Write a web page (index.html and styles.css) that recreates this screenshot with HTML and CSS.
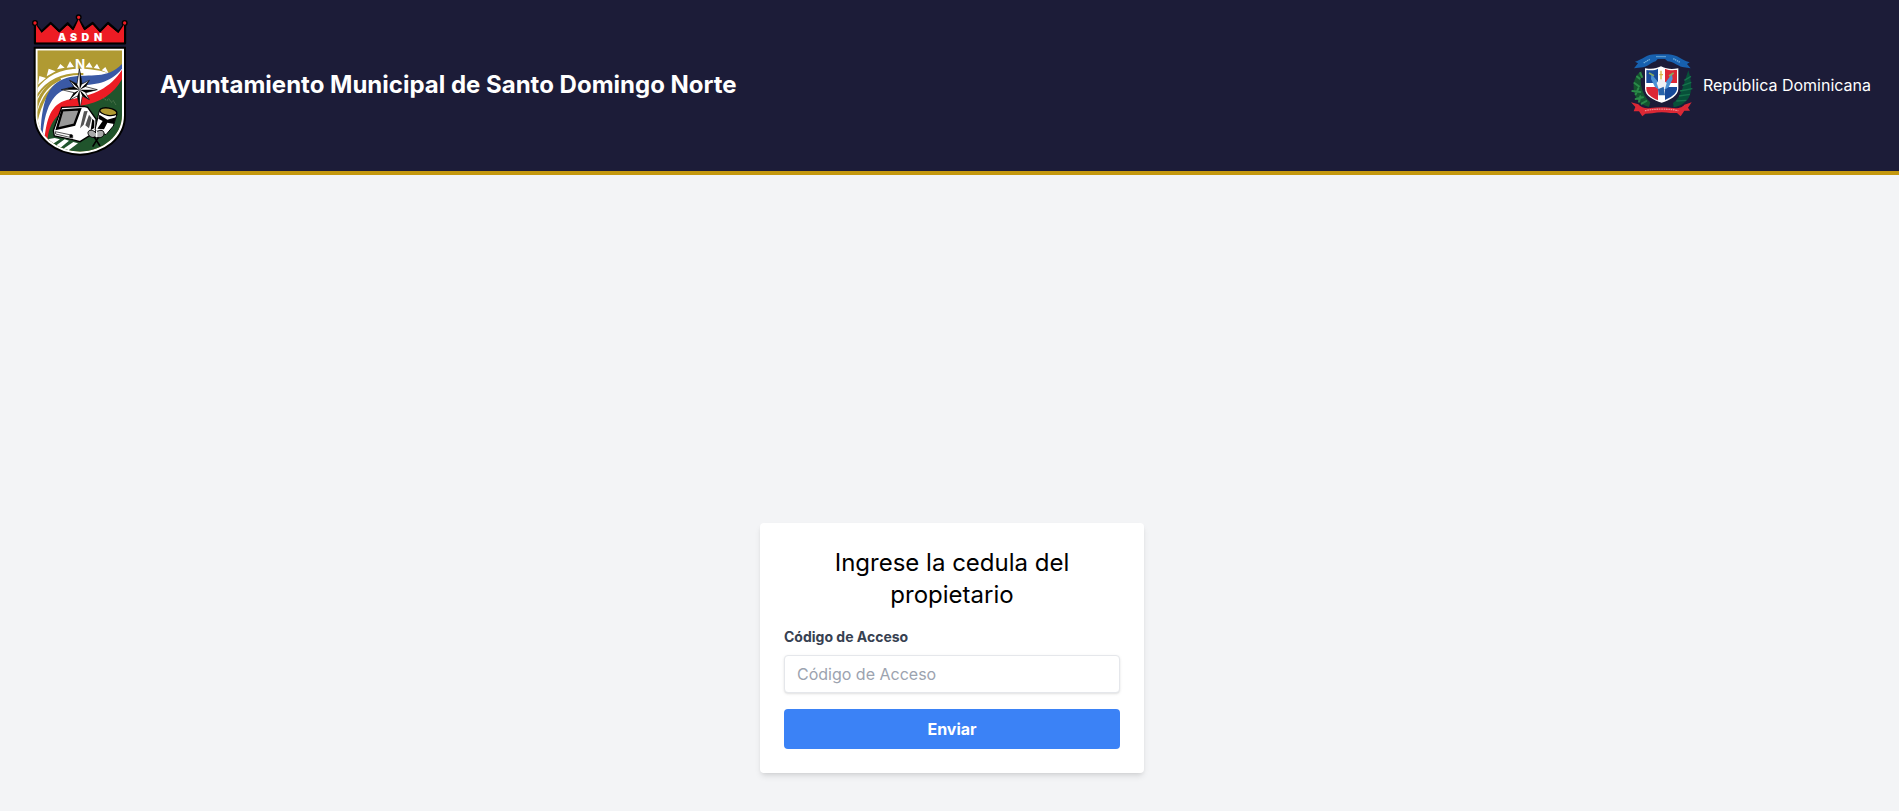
FILE: index.html
```html
<!DOCTYPE html>
<html lang="es">
<head>
<meta charset="utf-8">
<meta name="viewport" content="width=device-width, initial-scale=1">
<title>Ayuntamiento Municipal de Santo Domingo Norte</title>
<link rel="stylesheet" href="styles.css">
</head>
<body>
<header class="header">
  <div class="brand">
    <svg class="crest" viewBox="30 36 300 435" role="img" aria-label="Escudo ASDN">
      <defs>
        <clipPath id="shield"><path d="M52 151H306V345C306 408 249 452 180 455C111 452 52 408 52 345Z"/></clipPath>
      </defs>
      <path d="M45 130V73L65 95L92 69L118 94L143 70L159 87L176 58L194 87L218 69L240 94L264 69L295 96L315 72V130Z" fill="#ed1c24" stroke="#000" stroke-width="7" stroke-linejoin="round"/>
      <g fill="#ed1c24" stroke="#000" stroke-width="4"><circle cx="45" cy="69" r="7"/><circle cx="176" cy="52" r="7"/><circle cx="314" cy="69" r="7"/></g>
      <path d="M48 74L65 99L92 75L118 99L143 76L160 93L176 58L192 93L218 75L240 99L264 75L295 100L312 74V127H48Z" fill="#ed1c24"/>
      <g class="crest-name" text-anchor="middle">
        <text x="126" y="123">A</text>
        <text x="161" y="123">S</text>
        <text x="196" y="123">D</text>
        <text x="234" y="123">N</text>
      </g>
      <path d="M44 143H315V346C315 417 252 461 180 464C108 461 44 417 44 346Z" fill="#fff" stroke="#000" stroke-width="6"/>
      <g clip-path="url(#shield)">
        <path d="M50 150H308V460H50Z" fill="#b09a32"/>
        <path d="M50 268C85 217 145 194 240 212L275 222L190 262L54 420Z" fill="#fff"/>
        <path d="M50 290C80 240 125 220 190 222" fill="none" stroke="#b09a32" stroke-width="6"/>
        <path d="M48 325C62 275 87 252 122 236M48 365C62 305 82 272 116 252" fill="none" stroke="#b09a32" stroke-width="9"/>
        <path fill="#fff" d="M54 254L58 228L78 234ZM80 229L86 206L107 214ZM111 208L121 192L134 203ZM140 203L150 184L162 201ZM196 202L208 187L218 203ZM221 204L231 191L240 208ZM245 211L256 201L266 220Z"/>
        <path d="M62 400C66 290 90 244 150 231C215 220 260 240 308 190V260L130 380L60 420Z" fill="#3a59a5"/>
        <path d="M68 405C76 310 105 268 165 260C230 252 270 252 308 204V270L110 400L66 430Z" fill="#fff"/>
        <path d="M74 412C82 345 98 308 150 298C220 288 275 262 308 206V290L100 430Z" fill="#ed1c24"/>
        <path d="M82 462C76 380 105 328 178 318C245 308 282 280 308 234V462Z" fill="#20542c"/>
        <path d="M82 418L104 414L120 418L98 432ZM106 438L134 418L147 422L118 446ZM128 448L160 426L174 430L140 455Z" fill="#fff"/>
      </g>
      <text class="crest-north" x="180" y="206" text-anchor="middle">N</text>
      <path d="M178 206L186 252L208 241L197 260L232 269L197 278L208 299L187 288L180 326L172 288L149 300L162 278L124 269L162 260L149 241L171 252Z" fill="#fff" stroke="#000" stroke-width="2"/>
      <path d="M179 206L186 252L179 269ZM180 326L172 288L179 269ZM232 269L197 278L179 269ZM124 269L162 260L179 269ZM208 241L197 260L179 269ZM149 300L162 278L179 269ZM149 241L171 252L179 269ZM208 299L187 288L179 269Z"/>
      <path d="M125 322L192 319L203 322L228 357V395L180 425L157 419L103 408L100 392Z" fill="#fff" stroke="#000" stroke-width="4"/>
      <path d="M127 331L180 328L163 374L111 386Z" fill="#999" stroke="#000" stroke-width="7"/>
      <path d="M192 334L203 333L191 374L180 385ZM207 344L215 354L207 385L196 376Z" fill="#555"/>
      <path d="M217 356L223 362V384L212 391Z"/>
      <path d="M106 395L158 406V414L107 402Z" stroke="#000" stroke-width="2" fill="#fff"/>
      <circle cx="153" cy="408" r="5"/>
      <path d="M238 332L291 342L280 378L258 404L225 390Z" fill="#fff" stroke="#000" stroke-width="3"/>
      <path d="M238 344L262 359L288 352L282 372L262 368L252 388L232 386L248 363L235 356Z"/>
      <ellipse cx="265" cy="335" rx="26" ry="11" transform="rotate(9 265 335)" fill="#b09a32" stroke="#000" stroke-width="4"/>
      <path d="M228 412C215 415 203 408 204 397C206 388 220 389 228 399C236 387 252 389 252 400C252 411 240 416 228 412Z" fill="#aaa" stroke="#000" stroke-width="3"/>
      <path d="M230 391V412" stroke="#fff" stroke-width="4"/>
      <path d="M218 440L235 412M240 438L222 410" stroke="#000" stroke-width="5"/>
      <path d="M250 294L260 302L267 296L274 307L280 302L288 315" fill="none" stroke="#5d8057" stroke-width="3" stroke-dasharray="4 3"/>
    </svg>
    <h1 class="brand-title">Ayuntamiento Municipal de Santo Domingo Norte</h1>
  </div>
  <div class="country">
    <svg class="arms" viewBox="30 30 192 204" role="img" aria-label="Escudo de la República Dominicana">
      <path d="M45 82L57 67L48 62C72 56 80 40 110 40H148C178 42 184 56 212 64L204 69L215 82L190 78C175 75 162 61 146 61L138 54H116L110 61C96 64 89 76 72 79Z" fill="#1760ae"/>
      <path d="M74 66L92 55M112 47H141M163 53L183 64" stroke="#7cb5dd" stroke-width="4" stroke-dasharray="4 2"/>
      <path d="M68 90C54 98 42 116 44 142C45 170 60 190 90 198L94 184C75 166 64 141 65 111Z" fill="#14552f"/>
      <path d="M208 88C218 118 220 151 210 169C199 188 184 195 164 199L162 186C186 172 193 131 208 88Z" fill="#075039"/>
      <g fill="none" stroke="#2b8a49" stroke-width="6" stroke-linecap="round">
        <path d="M54 107L62 113M46 126L60 136M40 150L64 153M50 174L72 169M68 188L82 180M64 96L69 108M58 142L50 160M64 166L60 182"/>
      </g>
      <path d="M196 118L216 106M190 134L217 124M183 150L220 143M180 165L213 160M172 180L202 178" stroke="#16734c" stroke-width="4"/>
      <path d="M78 82C104 86 111 82 126 76C144 84 156 86 178 82V143C178 164 152 177 128 185C104 177 78 165 78 143Z" fill="#fff"/>
      <path d="M82 87C101 89 109 87 117 83V126H82Z" fill="#174a99"/>
      <path d="M138 83C149 88 159 88 174 87V126H138Z" fill="#dc2835"/>
      <path d="M82 138H117V178C97 168 82 159 82 143Z" fill="#dc2835"/>
      <path d="M138 138H174V145C173 159 153 171 138 177Z" fill="#174a99"/>
      <path d="M97 98L119 125L121 147L108 138L96 114ZM159 98L139 125L136 147L149 139L161 114Z" fill="#4c91d3"/>
      <path d="M113 126L126 112L143 126L138 144H119Z" fill="#eef1f4"/>
      <path d="M117 145L134 137L138 163H119Z" fill="#2863a9"/>
      <path d="M126 89V115M121 101H132" stroke="#d9b846" stroke-width="4"/>
      <path d="M90 96L105 104M150 105L164 96" stroke="#88a95d" stroke-width="5"/>
      <path d="M36 184L58 190C66 201 82 203 94 201C117 198 142 198 161 201C182 203 192 197 196 191L218 184L207 200L213 209H196L185 226L174 216H154C137 213 117 213 100 217L79 218L70 226L60 211H44L49 198Z" fill="#dc2835"/>
      <path d="M78 209C102 203 155 203 178 209" fill="none" stroke="#ef8b91" stroke-width="4" stroke-dasharray="5 2"/>
    </svg>
    <span>República Dominicana</span>
  </div>
</header>
<main class="main">
  <form class="card">
    <h2 class="card-title">Ingrese la cedula del propietario</h2>
    <label class="label" for="codigo">Código de Acceso</label>
    <input class="input" id="codigo" type="text" placeholder="Código de Acceso">
    <button class="button" type="button">Enviar</button>
  </form>
</main>
</body>
</html>
```
FILE: styles.css
```css
* { box-sizing: border-box; margin: 0; }

body {
  display: flex;
  flex-direction: column;
  min-height: 100vh;
  background: #f3f4f6;
  color: #000;
  font: 16px/24px Inter, sans-serif;
}

.header {
  display: flex;
  align-items: center;
  justify-content: space-between;
  padding: 12px 28px 14px 30px;
  background: #1c1c38;
  border-bottom: 4px solid #c4980e;
  color: #fff;
}

.brand { display: flex; align-items: center; gap: 30px; }
.crest { display: block; width: 100px; height: 145px; }
.crest-name { font: 900 32px Inter, sans-serif; fill: #fff; }
.crest-north { font: 700 40px Inter, sans-serif; fill: #fff; }
.brand-title { font-size: 24px; line-height: 32px; font-weight: 700; }

.country { display: flex; align-items: center; gap: 10px; }
.arms { display: block; width: 64px; height: 68px; }

.main {
  flex: 1;
  display: flex;
  align-items: flex-end;
  justify-content: center;
  padding: 38px 0 38px 5px;
}

.card {
  display: flex;
  flex-direction: column;
  width: 100%;
  max-width: 384px;
  padding: 24px;
  background: #fff;
  border-radius: 4px;
  box-shadow: 0 4px 6px -1px rgb(0 0 0 / 0.1), 0 2px 4px -2px rgb(0 0 0 / 0.1);
}

.card-title {
  margin-bottom: 16px;
  font-size: 24px;
  line-height: 32px;
  font-weight: 400;
  text-align: center;
}

.label {
  margin-bottom: 8px;
  color: #374151;
  font-size: 14px;
  line-height: 20px;
  font-weight: 700;
}

.input {
  margin-bottom: 16px;
  padding: 8px 12px;
  border: 1px solid #e5e7eb;
  border-radius: 4px;
  background: #fff;
  box-shadow: 0 1px 3px rgb(0 0 0 / 0.1), 0 1px 2px -1px rgb(0 0 0 / 0.1);
  color: #374151;
  font: 16px/20px Inter, sans-serif;
}

.input::placeholder { color: #9ca3af; opacity: 1; }

.button {
  padding: 8px 16px;
  border: 0;
  border-radius: 4px;
  background: #3b82f6;
  color: #fff;
  font: 700 16px/24px Inter, sans-serif;
}
```
